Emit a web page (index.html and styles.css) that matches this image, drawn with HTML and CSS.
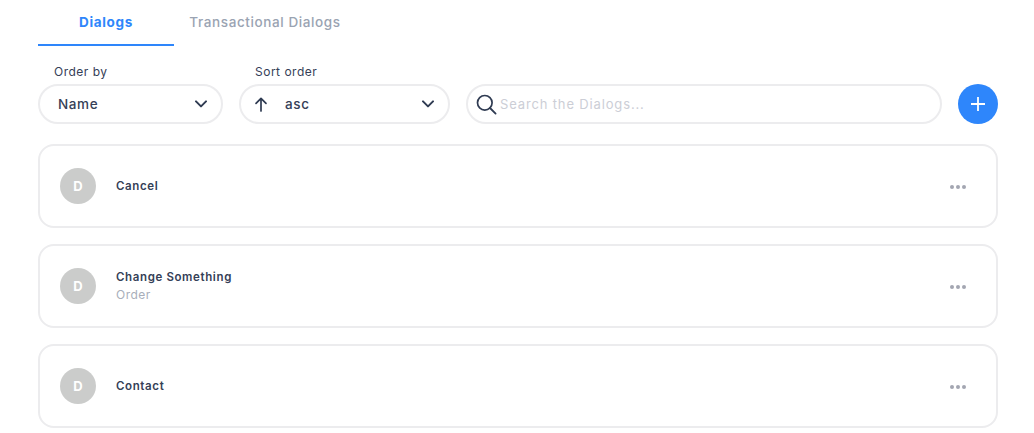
FILE: index.html
```html
<!DOCTYPE html>
<html lang="en">
<head>
<meta charset="utf-8">
<title>Dialogs</title>
<link rel="stylesheet" href="styles.css">
</head>
<body>
<div class="page">
  <nav class="tabs">
    <a class="tab active">Dialogs</a>
    <a class="tab">Transactional Dialogs</a>
  </nav>
  <div class="toolbar">
    <div class="field order">
      <label class="label">Order by</label>
      <div class="select">
        <span class="value">Name</span>
        <svg class="chev" width="14" height="8" viewBox="0 0 14 8"><path d="M2 1.4 7 6.4l5-5" fill="none" stroke="#2f3b52" stroke-width="2" stroke-linecap="round" stroke-linejoin="round"/></svg>
      </div>
    </div>
    <div class="field sort">
      <label class="label">Sort order</label>
      <div class="select">
        <svg class="arrow" width="14" height="15" viewBox="0 0 14 15"><path d="M7 14V1.5M2 6.3 7 1.3l5 5" fill="none" stroke="#2f3b52" stroke-width="1.7" stroke-linecap="round" stroke-linejoin="round"/></svg>
        <span class="value">asc</span>
        <svg class="chev" width="14" height="8" viewBox="0 0 14 8"><path d="M2 1.4 7 6.4l5-5" fill="none" stroke="#2f3b52" stroke-width="2" stroke-linecap="round" stroke-linejoin="round"/></svg>
      </div>
    </div>
    <div class="search">
      <svg width="21" height="21" viewBox="0 0 21 21"><circle cx="8.8" cy="8.8" r="7.3" fill="none" stroke="#2f3b52" stroke-width="1.7"/><path d="m14 14 5.6 5.6" fill="none" stroke="#2f3b52" stroke-width="1.8" stroke-linecap="round"/></svg>
      <span class="placeholder">Search the Dialogs...</span>
    </div>
    <button class="add" type="button" aria-label="Add">
      <svg width="14" height="14" viewBox="0 0 14 14"><path d="M7 0v14M0 7h14" stroke="#fff" stroke-width="1.8"/></svg>
    </button>
  </div>
  <div class="list">
    <div class="card">
      <div class="avatar">D</div>
      <div class="info"><div class="name">Cancel</div></div>
      <div class="more"><i></i><i></i><i></i></div>
    </div>
    <div class="card">
      <div class="avatar">D</div>
      <div class="info"><div class="name">Change Something</div><div class="sub">Order</div></div>
      <div class="more"><i></i><i></i><i></i></div>
    </div>
    <div class="card">
      <div class="avatar">D</div>
      <div class="info"><div class="name">Contact</div></div>
      <div class="more"><i></i><i></i><i></i></div>
    </div>
  </div>
</div>
</body>
</html>
```

FILE: styles.css
```css
* { box-sizing: border-box; }
html, body { margin: 0; height: 100%; background: #fff; overflow: hidden; }
body { font-family: Inter, "Noto Sans", sans-serif; color: #354057; }
.page { padding: 0 36px 0 38px; }
.tabs { display: flex; height: 46px; }
.tab { width: 136px; height: 46px; padding-top: 14px; text-align: center; font-size: 13.5px; line-height: 16px; font-weight: 500; color: #9aa3b2; border-bottom: 2px solid transparent; letter-spacing: .6px; white-space: nowrap; }
.tab + .tab { width: 182px; }
.tab.active { color: #2e86fb; font-weight: 700; letter-spacing: .65px; border-bottom-color: #2e86fb; }
.toolbar { display: flex; align-items: flex-end; gap: 16px; margin-top: 18px; }
.field { display: flex; flex-direction: column; }
.order { width: 185px; }
.sort { width: 211px; }
.label { font-size: 12px; line-height: 16px; padding-left: 16px; margin-bottom: 4px; font-weight: 400; letter-spacing: .5px; }
.select { height: 40px; border: 2px solid #ececee; border-radius: 20px; display: flex; align-items: center; padding: 0 13px 0 18px; font-size: 13.5px; font-weight: 500; letter-spacing: .6px; }
.sort .select { padding-left: 13px; }
.value { flex: 1; }
.arrow { margin-right: 17px; }
.search { flex: 1; height: 40px; border: 2px solid #ececee; border-radius: 20px; display: flex; align-items: center; padding-left: 8px; gap: 3px; }
.placeholder { font-size: 13px; color: #ccced6; letter-spacing: .85px; }
.add { width: 40px; height: 40px; border: 0; padding: 0; border-radius: 50%; background: #2e86fb; display: flex; align-items: center; justify-content: center; }
.list { display: flex; flex-direction: column; gap: 16px; margin-top: 20px; }
.card { height: 84px; border: 2px solid #ececee; border-radius: 16px; display: flex; align-items: center; padding: 0 30px 0 20px; }
.avatar { width: 36px; height: 36px; border-radius: 50%; background: #cbcccb; color: #fff; font-size: 13px; font-weight: 700; display: flex; align-items: center; justify-content: center; }
.info { flex: 1; margin-left: 20px; }
.name { font-size: 11.5px; line-height: 16px; font-weight: 600; letter-spacing: .62px; }
.sub { font-size: 12px; line-height: 16px; margin-top: 2px; color: #a8aeba; letter-spacing: .45px; }
.more { display: flex; gap: 2px; margin-top: 2px; }
.more i { width: 4px; height: 4px; border-radius: 50%; background: #a3a6b1; display: block; }
```
